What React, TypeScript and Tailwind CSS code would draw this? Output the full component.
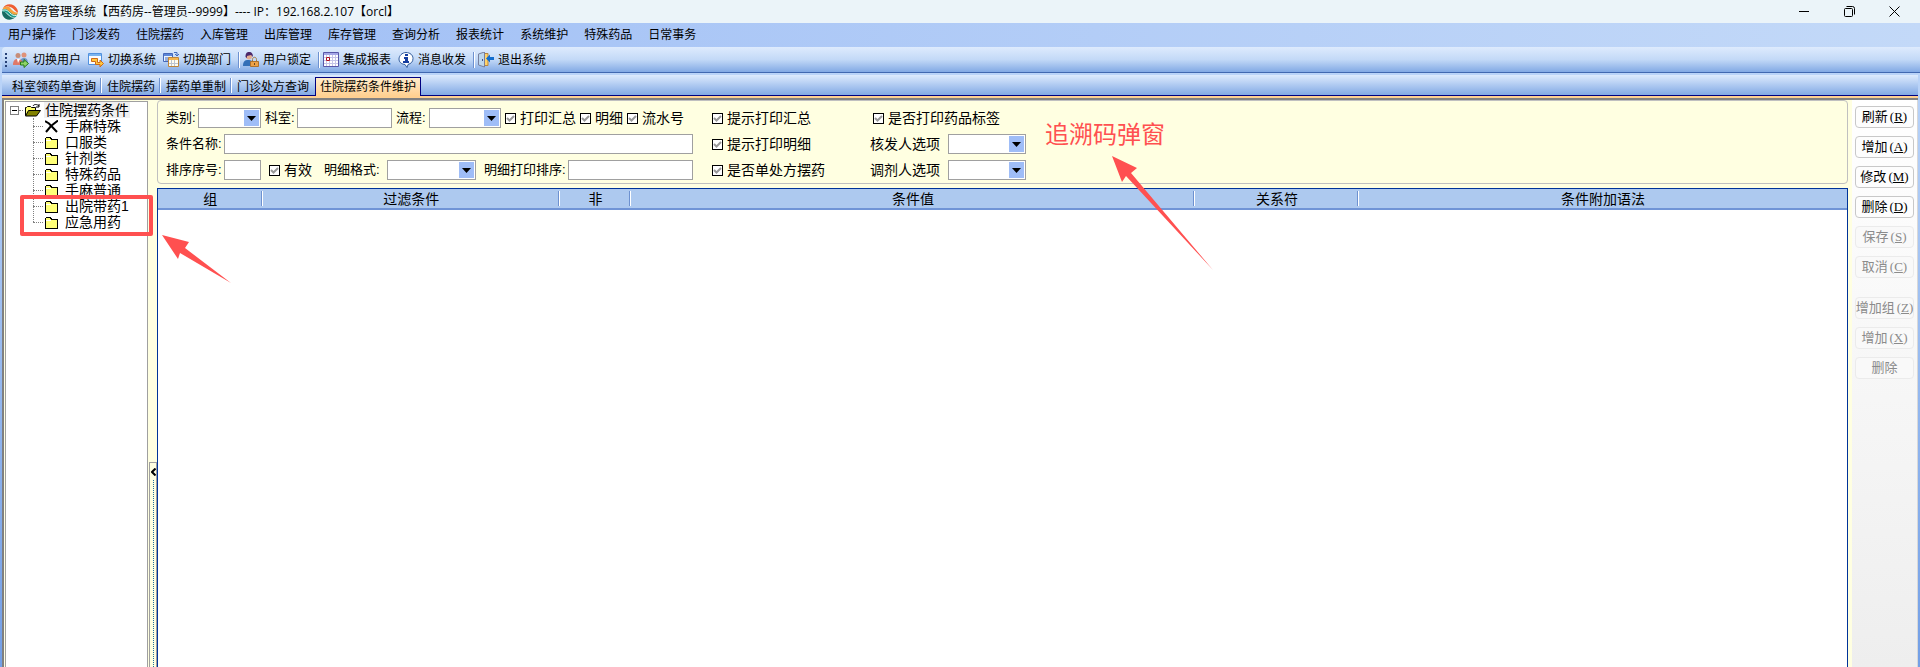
import { useState } from "react";
import type { ReactNode } from "react";

const menus = [
  "用户操作",
  "门诊发药",
  "住院摆药",
  "入库管理",
  "出库管理",
  "库存管理",
  "查询分析",
  "报表统计",
  "系统维护",
  "特殊药品",
  "日常事务",
];

const tabs = ["科室领药单查询", "住院摆药", "摆药单重制", "门诊处方查询", "住院摆药条件维护"];

const treeItems = ["手麻特殊", "口服类", "针剂类", "特殊药品", "手麻普通", "出院带药1", "应急用药"];

interface Action {
  label: string;
  hotkey?: string;
  disabled?: boolean;
}

const actions: Action[] = [
  { label: "刷新", hotkey: "R" },
  { label: "增加", hotkey: "A" },
  { label: "修改", hotkey: "M" },
  { label: "删除", hotkey: "D" },
  { label: "保存", hotkey: "S", disabled: true },
  { label: "取消", hotkey: "C", disabled: true },
];

const groupActions: Action[] = [
  { label: "增加组", hotkey: "Z", disabled: true },
  { label: "增加", hotkey: "X", disabled: true },
  { label: "删除", disabled: true },
];

const columns = [
  { title: "组", width: "w-[6.2%]" },
  { title: "过滤条件", width: "w-[17.6%]" },
  { title: "非", width: "w-[4.2%]" },
  { title: "条件值", width: "w-[33.4%]" },
  { title: "关系符", width: "w-[9.7%]" },
  { title: "条件附加语法", width: "w-[28.9%]" },
];

/* ---------- Icons ---------- */

function LogoIcon() {
  return (
    <svg width="16" height="16" viewBox="0 0 16 16">
      <path d="M1 4C3 0 8-1 12 1.500c3 2 4 5 4 7C13 8 12 4 8 3 5 2 3 3 1 4Z" fill="#ef5f33" />
      <path d="M1 4c3-2 6-2 8 1 2 2 4 4 7 3.500l-1 2.500c-4 1-6-1-8-3S3 5 .5 6Z" fill="#f7a13c" />
      <path d="M.5 5.500C4 4 6 6 8 8s4 3 7 2.500L14 13c-4 1-6-1-8-3S2 7 0 8Z" fill="#179c8b" />
      <path d="M0 7.500C3 7 4 9 6 11s4 3 7 2.500C9 17 3 16 1 12c-1-2-1-3-1-4.500Z" fill="#186a63" />
      <path d="M.5 6.500C4 5 6 7 8 9s4 3 6.500 2.500" stroke="#e8f7f4" fill="none" />
    </svg>
  );
}

function UsersIcon() {
  return (
    <svg width="16" height="16" viewBox="0 0 16 16">
      <circle cx="5" cy="3.500" r="2.500" fill="#c78d78" />
      <circle cx="11" cy="3" r="2.500" fill="#df9279" />
      <path d="M7 12c0-4 1-6 4-6s4 2 4 6Z" fill="#6c95c8" />
      <path d="M0 13c0-5 2-6 5-6s5 2 5 6Z" fill="#df7969" />
      <path d="m4 7 1 4 2-4Z" fill="#fff" />
      <path d="M7.500 10H11V7.500l4.500 4-4.500 4V13H7.500Z" fill="#8fd468" stroke="#267819" />
    </svg>
  );
}

function SystemIcon() {
  return (
    <svg width="16" height="16" viewBox="0 0 16 16">
      <path d="M.5 1.500h13v11H.5Z" fill="#f8fbff" stroke="#5091df" />
      <path d="M1 2h12v2H1Z" fill="#7bb4ef" />
      <path d="M3.500 6.500h6v4H12V8l3.500 3.500L12 15v-2.500H7.500v-3h-4Z" fill="#ffc83e" stroke="#ce6a1a" />
    </svg>
  );
}

function DeptIcon() {
  return (
    <svg width="16" height="16" viewBox="0 0 16 16">
      <path d="M.5 1.500h9v8h-9Z" fill="#eaf4ff" stroke="#4567b8" />
      <path d="M1 2h8v2H1Z" fill="#5b86d8" />
      <path d="M2 6h4M2 8h3M11 .5h3v3M12 2l2 2 2-2" fill="none" stroke="#4169bd" />
      <path d="M5.500 5.500h10v9h-10Z" fill="#fffdf0" stroke="#bd853c" />
      <path d="M6 6h9v2H6Z" fill="#f5b54d" />
      <path d="M8.500 8v6m3-6v6M6 11.500h9" stroke="#bdc4d0" />
    </svg>
  );
}

function LockUserIcon() {
  return (
    <svg width="16" height="16" viewBox="0 0 16 16">
      <path d="M0 14c0-5 2-6 5-6s6 1 6 6Z" fill="#346fb7" />
      <circle cx="6" cy="4.500" r="3" fill="#e5ad91" />
      <path d="M2.500 5c0-4 1.500-5 3.500-5 3 0 4 2 4 5L8 3 4 4v2Z" fill="#4b2869" />
      <path d="M9.500 9V7.500c0-3 4-3 4 0V9" fill="none" stroke="#a67c3b" />
      <path d="M7.500 9.500h8v5h-8Z" fill="#eda247" stroke="#ad712d" />
      <path d="M11 11h1v2h-1Z" fill="#694723" />
    </svg>
  );
}

function ReportIcon() {
  return (
    <svg width="16" height="16" viewBox="0 0 16 16">
      <path d="M.5.5h15v14H.5Z" fill="#fff" stroke="#5857a8" />
      <path d="M1 1h14v2H1Z" fill="#a5a8e7" />
      <path d="M3.500 3v11m3-11v11m3-11v11m3-11v11M1 5.500h14M1 8.500h14M1 11.500h14" stroke="#c5c5e8" />
      <path d="M3.500 5.500h3v3h-3Z" fill="#fff" stroke="#b01020" />
    </svg>
  );
}

function InfoIcon() {
  return (
    <svg width="16" height="16" viewBox="0 0 16 16">
      <path d="M8 .5c4 0 7 2.500 7 6s-2 5-5 6l-1 3-2-3C3 12 1 10 1 7S4 .5 8 .5Z" fill="#fff" stroke="#315c9e" />
      <path d="M7 2h3v2H7ZM6 5h4v4h1v2H5V9h2V7H6Z" fill="#163ea0" />
    </svg>
  );
}

function ExitIcon() {
  return (
    <svg width="16" height="16" viewBox="0 0 16 16">
      <path d="M5 1.500h5v12H5Z" fill="#ffd36a" stroke="#b9873e" />
      <path d="m.5 2 6-2v15l-6-2Z" fill="#bcd7ef" stroke="#777f9e" />
      <path d="M4 7h1v2H4Z" fill="#46528a" />
      <path d="m8 6.500 4-4v2.500h4v3h-4v2.500Z" fill="#126dce" />
    </svg>
  );
}

function OpenFolderIcon() {
  return (
    <svg width="16" height="13" viewBox="0 0 16 13">
      <path d="M.5 11.500v-8h1l1-1h3l1 1h4v3" fill="#ffff70" stroke="#000" />
      <path d="m.5 12 3-5.500h12l-4 5.500Z" fill="#828200" stroke="#000" />
      <path d="M8 2c1-2 4-2 6 0m0-2v3h-3" fill="none" stroke="#000" />
    </svg>
  );
}

function FolderIcon() {
  return (
    <svg width="13" height="13" viewBox="0 0 13 13" shapeRendering="crispEdges">
      <path d="M.5 12.500v-10l1-1h4l1 2h6v9Z" fill="#ffff78" stroke="#000" />
      <path d="M1 4.500h5" stroke="#fff" />
    </svg>
  );
}

function CrossIcon() {
  return (
    <svg width="13" height="13" viewBox="0 0 13 13">
      <path d="m0 1 4 2.500L12 12M13 .5 6 6l-5 6" fill="none" stroke="#000" strokeWidth="2" />
    </svg>
  );
}

function Arrow({ className, width, height, points }: { className: string; width: number; height: number; points: string }) {
  return (
    <svg className={"pointer-events-none absolute " + className} width={width} height={height}>
      <polygon points={points} fill="#ff5050" />
    </svg>
  );
}

/* ---------- Form controls ---------- */

function Field({ label, width }: { label: string; width: string }) {
  return (
    <label className={"flex items-center gap-[2px] " + width}>
      <span className="shrink-0">{label}:</span>
      <input className="h-5 min-w-0 flex-1 border border-[#a0a0a0] bg-white px-1 outline-none" />
    </label>
  );
}

function Combo({ label, width, selectWidth, large }: { label: string; width: string; selectWidth: string; large?: boolean }) {
  return (
    <label className={"flex items-center justify-between " + width + (large ? " text-sm leading-5" : "")}>
      <span className="shrink-0">{large ? label : label + ":"}</span>
      <span className={"relative h-5 " + selectWidth}>
        <select className="block h-5 w-full appearance-none border border-[#a0a0a0] bg-white outline-none">
          <option></option>
        </select>
        <span className="pointer-events-none absolute inset-y-[2px] right-[2px] flex w-[15px] items-center justify-center bg-[#9fbdf7]">
          <svg width="9" height="5" viewBox="0 0 9 5">
            <path d="M0 0h9L4.500 5Z" fill="#000" />
          </svg>
        </span>
      </span>
    </label>
  );
}

function Check({ label }: { label: string }) {
  const [checked, setChecked] = useState(true);

  return (
    <label className="flex items-center gap-1 text-sm leading-5">
      <span className="relative size-[11px]">
        <input
          type="checkbox"
          checked={checked}
          onChange={(e) => setChecked(e.target.checked)}
          className="block size-[11px] appearance-none border border-black bg-white"
        />
        {checked && (
          <svg className="pointer-events-none absolute inset-0" width="11" height="11" viewBox="0 0 11 11">
            <path d="m2 5 2.500 2.500L9 3" fill="none" stroke="#999" strokeWidth="2" />
          </svg>
        )}
      </span>
      {label}
    </label>
  );
}

function ToolButton({ icon, label }: { icon: ReactNode; label: string }) {
  return (
    <button className="flex h-6 items-center gap-1 pr-[7px]">
      {icon}
      <span>{label}</span>
    </button>
  );
}

function ToolDivider() {
  return <span className="mr-[3px] h-4 w-[2px] border-l border-[#6d91d0] bg-white" />;
}

function SideButton({ action }: { action: Action }) {
  return (
    <button
      disabled={action.disabled}
      className="flex h-[22px] w-full items-center justify-center gap-[2px] rounded border border-[#c8c8c8] bg-[#fdfdfd] text-[13px] leading-5 whitespace-nowrap disabled:border-[#ebebeb] disabled:bg-[#f9f9f9] disabled:text-[#8b8b8b]"
    >
      <span>{action.label}</span>
      {action.hotkey && (
        <span className="font-['Liberation_Serif',serif]">
          (<u>{action.hotkey}</u>)
        </span>
      )}
    </button>
  );
}

export default function App() {
  const [activeTab, setActiveTab] = useState("住院摆药条件维护");

  return (
    <div className="relative flex h-screen flex-col overflow-hidden bg-linear-to-b from-[#c3dafa] to-[#739fe6] font-['Liberation_Sans','Noto_Sans_CJK_SC',sans-serif] text-xs text-black">
      <header className="flex h-[23px] shrink-0 items-center bg-[#ebf4f9] pr-5 pl-[2px]">
        <LogoIcon />
        <h1 className="ml-[6px] font-['Open_Sans','Noto_Sans_CJK_SC',sans-serif] text-xs whitespace-pre">
          药房管理系统【西药房--管理员--9999】---- IP：192.168.2.107【orcl】
        </h1>
        <div className="ml-auto flex gap-[34px]">
          <button aria-label="最小化">
            <svg width="11" height="11" viewBox="0 0 11 11">
              <path d="M0 5.500h10" stroke="#000" />
            </svg>
          </button>
          <button aria-label="还原">
            <svg width="11" height="11" viewBox="0 0 11 11" fill="none" stroke="#000">
              <rect x=".5" y="2.500" width="8" height="8" rx="1" />
              <path d="M2.500.5h6q2 0 2 2v6" />
            </svg>
          </button>
          <button aria-label="关闭">
            <svg width="11" height="11" viewBox="0 0 11 11">
              <path d="m.5.5 10 10m0-10-10 10" stroke="#000" />
            </svg>
          </button>
        </div>
      </header>

      <nav className="flex h-6 shrink-0 items-center gap-4 bg-linear-to-r from-[#9ebdf5] to-[#c3d9f8] pl-2">
        {menus.map((menu) => (
          <button key={menu}>{menu}</button>
        ))}
      </nav>

      <div className="ml-[2px] flex h-[26px] shrink-0 items-center rounded-tl border-b border-[#4168b0] bg-linear-to-b from-[#deebfd] via-[#c3d9f7] to-[#82a9e4] pl-[3px]">
        <span className="mr-[6px] h-[14px] border-l-2 border-dotted border-[#274176]" />
        <ToolButton icon={<UsersIcon />} label="切换用户" />
        <ToolButton icon={<SystemIcon />} label="切换系统" />
        <ToolButton icon={<DeptIcon />} label="切换部门" />
        <ToolDivider />
        <ToolButton icon={<LockUserIcon />} label="用户锁定" />
        <ToolDivider />
        <ToolButton icon={<ReportIcon />} label="集成报表" />
        <ToolButton icon={<InfoIcon />} label="消息收发" />
        <ToolDivider />
        <ToolButton icon={<ExitIcon />} label="退出系统" />
      </div>

      <div className="mx-[2px] flex min-h-0 flex-1 flex-col pt-[2px]">
        <div className="flex h-[21px] shrink-0 items-end border-b border-[#000080] bg-linear-to-b from-[#deebfd] to-[#82a9e4]">
          {tabs.map((tab, i) => (
            <button
              key={tab}
              onClick={() => setActiveTab(tab)}
              className={
                "relative flex items-center " +
                (tab === activeTab
                  ? "-mb-px h-[19px] border border-b-0 border-[#000080] bg-linear-to-b from-[#ffeccb] to-[#ffd091] px-1"
                  : "h-[17px] " + (i === 0 ? "pr-[6px] pl-[10px]" : "pr-[6px] pl-[5px]"))
              }
            >
              {tab}
              {tab !== activeTab && i < tabs.length - 2 && (
                <span className="absolute top-0 right-0 h-[15px] w-[2px] border-l border-[#6d91d0] bg-white" />
              )}
            </button>
          ))}
        </div>
        <div className="h-[2px] shrink-0 bg-[#ffd091]" />

        <div className="flex min-h-0 flex-1 border-t-2 border-l-2 border-[#808080] bg-[#ffffe1]">
          <aside className="mt-px ml-px w-[143px] shrink-0 border border-b-0 border-[#a0a0a0] bg-white pl-1 text-sm leading-4">
            <div className="flex h-4 items-center">
              <button aria-label="折叠" className="flex size-[9px] items-center justify-center border border-[#808080]">
                <span className="h-px w-[5px] bg-black" />
              </button>
              <span className="mr-[2px] w-1 border-t border-dotted border-[#808080]" />
              <OpenFolderIcon />
              <button className="ml-[3px] bg-[#f0f0f0] px-px">住院摆药条件</button>
            </div>
            <ul className="relative ml-[23px]">
              <li className="absolute top-0 left-0 h-[104px] border-l border-dotted border-[#808080]" aria-hidden="true" />
              {treeItems.map((item, i) => (
                <li key={item} className="flex h-4 items-center">
                  <span className="mr-[2px] w-[10px] border-t border-dotted border-[#808080]" />
                  {i === 0 ? <CrossIcon /> : <FolderIcon />}
                  <button className="ml-[7px]">{item}</button>
                </li>
              ))}
            </ul>
          </aside>

          <div className="flex w-[9px] shrink-0 flex-col pl-px">
            <div className="flex-[366]" />
            <button
              aria-label="收起"
              className="flex flex-[201] flex-col items-center border border-b-0 border-[#a0a0a0] bg-[#ffffe1] pt-[5px]"
            >
              <svg width="5" height="8" viewBox="0 0 5 8">
                <path d="M4.500.5 1 4l3.500 3.500" fill="none" stroke="#000" strokeWidth="2" />
              </svg>
              <span className="mt-1 flex-1 border-l border-dotted border-[#1f6f9f]" />
            </button>
          </div>

          <main className="flex min-w-0 flex-1 flex-col">
            <form className="mb-1 flex h-[84px] shrink-0 gap-[19px] rounded border border-[#c0c0c0] pl-2 text-[13px] leading-5">
              <div className="flex w-[527px] shrink-0 flex-col gap-[6px] pt-[7px]">
                <div className="flex items-center gap-1">
                  <Combo label="类别" width="w-[95px]" selectWidth="w-[63px]" />
                  <Field label="科室" width="w-[127px]" />
                  <Combo label="流程" width="w-[105px]" selectWidth="w-[72px]" />
                  <Check label="打印汇总" />
                  <Check label="明细" />
                  <Check label="流水号" />
                </div>
                <Field label="条件名称" width="w-full" />
                <div className="flex items-center">
                  <Field label="排序序号" width="w-[95px]" />
                  <div className="mr-3 ml-2">
                    <Check label="有效" />
                  </div>
                  <Combo label="明细格式" width="w-[152px]" selectWidth="w-[89px]" />
                  <div className="ml-2 flex-1">
                    <Field label="明细打印排序" width="w-full" />
                  </div>
                </div>
              </div>
              <div className="flex w-[139px] shrink-0 flex-col gap-[6px] pt-[7px]">
                <Check label="提示打印汇总" />
                <Check label="提示打印明细" />
                <Check label="是否单处方摆药" />
              </div>
              <div className="flex w-[156px] shrink-0 flex-col gap-[6px] pt-[7px]">
                <div className="pl-[3px]">
                  <Check label="是否打印药品标签" />
                </div>
                <Combo label="核发人选项" width="w-full" selectWidth="w-[78px]" large />
                <Combo label="调剂人选项" width="w-full" selectWidth="w-[78px]" large />
              </div>
              <p className="pt-[18px] text-2xl text-[#ff5050]">追溯码弹窗</p>
            </form>

            <div className="min-h-0 flex-1 border border-b-0 border-[#003399] bg-white">
              <table className="w-full table-fixed border-collapse">
                <thead>
                  <tr className="h-5 border-b-2 border-[#7094d6] bg-[#adc9ef] text-sm leading-4">
                    {columns.map((col, i) => (
                      <th key={col.title} className={"relative p-0 font-normal " + col.width}>
                        {col.title}
                        {i < columns.length - 1 && (
                          <span className="absolute top-[2px] right-0 h-[15px] w-[2px] border-l border-[#6d91d0] bg-white" />
                        )}
                      </th>
                    ))}
                  </tr>
                </thead>
                <tbody></tbody>
              </table>
            </div>
          </main>

          <div className="ml-1 flex w-[66px] shrink-0 flex-col gap-2 border-r border-[#d8d8d8] bg-linear-to-b from-white to-[#eeeeee] px-[3px] pt-[6px]">
            {actions.map((action) => (
              <SideButton key={action.label} action={action} />
            ))}
            <div className="mt-[11px] flex flex-col gap-2">
              {groupActions.map((action) => (
                <SideButton key={action.label} action={action} />
              ))}
            </div>
          </div>
        </div>
      </div>

      {/* Annotations drawn over the window */}
      <div className="pointer-events-none absolute top-[195px] left-5 h-[41px] w-[133px] rounded-xs border-4 border-[#ff5050]" />
      <Arrow className="top-[235px] left-[161px]" width={71} height={50} points="1,0 28,7 24,13 70,48 19,18 17,24" />
      <Arrow className="top-[155px] left-[1111px]" width={103} height={116} points="1,1 26,13 20,18 102,115 15,21 11,27" />
    </div>
  );
}
